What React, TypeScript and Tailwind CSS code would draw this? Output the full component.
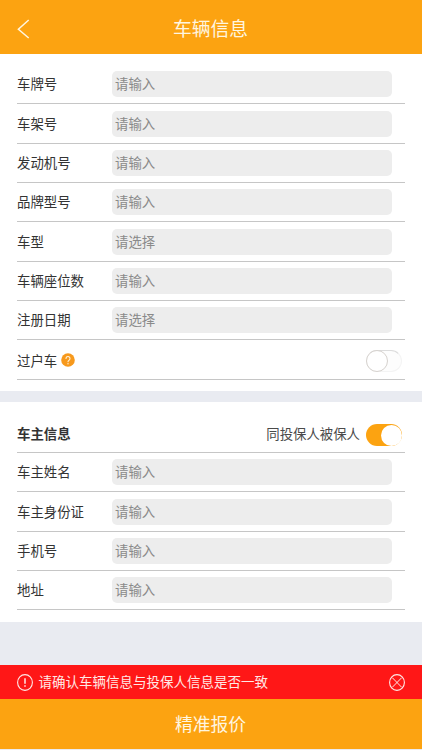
import { useState } from 'react'

interface Field {
  label: string
  placeholder: string
}

const vehicleFields: Field[] = [
  { label: '车牌号', placeholder: '请输入' },
  { label: '车架号', placeholder: '请输入' },
  { label: '发动机号', placeholder: '请输入' },
  { label: '品牌型号', placeholder: '请输入' },
  { label: '车型', placeholder: '请选择' },
  { label: '车辆座位数', placeholder: '请输入' },
  { label: '注册日期', placeholder: '请选择' },
]

const ownerFields: Field[] = [
  { label: '车主姓名', placeholder: '请输入' },
  { label: '车主身份证', placeholder: '请输入' },
  { label: '手机号', placeholder: '请输入' },
  { label: '地址', placeholder: '请输入' },
]

const FieldRow = ({ label, placeholder }: Field) => (
  <label className="flex h-[39.35px] items-center border-b border-[#c6c6c6]">
    <span className="w-[95px] shrink-0 pb-[2px]">{label}</span>
    <input
      placeholder={placeholder}
      className="h-[26px] w-[280px] rounded-[5px] bg-[#ededed] px-[3px] pb-[2px] outline-none placeholder:text-[#8a8a8a]"
    />
  </label>
)

const Toggle = ({ checked, onChange }: { checked: boolean; onChange: () => void }) => (
  <button
    role="switch"
    aria-checked={checked}
    onClick={onChange}
    className={`flex h-[22px] w-9 items-center rounded-full ${
      checked
        ? 'justify-end bg-[#fca311]'
        : 'justify-start border border-[#f4f4f4] border-t-[#dcdcdc] bg-[#fdfdfd]'
    }`}
  >
    <span
      className={`rounded-full bg-white ${
        checked ? 'mr-[0.5px] size-[21px]' : '-ml-px size-[22px] border border-[#d6d2ce]'
      }`}
    />
  </button>
)

export default function App() {
  const [transferred, setTransferred] = useState(false)
  const [sameAsInsured, setSameAsInsured] = useState(true)
  const [showAlert, setShowAlert] = useState(true)

  return (
    <div className="flex h-[750px] w-[422px] flex-col bg-[#e9ebf1] font-['Noto_Sans_CJK_SC',sans-serif] text-[13.4px] leading-5 text-[#333]">
      <header className="grid h-[54px] shrink-0 grid-cols-[1fr_auto_1fr] items-center bg-[#fca311] pl-[17px] pr-[18px] pt-1 text-[#fff6e0]">
        <button aria-label="返回">
          <svg width="13" height="20" viewBox="0 0 13 20" fill="none" stroke="currentColor" strokeWidth="1.5">
            <path d="M11.7 1 1.4 10.2 11.7 19" />
          </svg>
        </button>
        <h1 className="pb-[2px] text-[18.8px] leading-7">车辆信息</h1>
      </header>

      <section className="h-[337px] shrink-0 bg-white px-[17px] pt-[11px]">
        {vehicleFields.map((field) => (
          <FieldRow key={field.label} {...field} />
        ))}
        <div className="flex h-[39.35px] items-center border-b border-[#c6c6c6] pr-[3px]">
          <span>过户车</span>
          <svg className="ml-[3.5px]" width="14" height="14" viewBox="0 0 14 14" fill="none">
            <circle cx="7" cy="7" r="6.8" fill="#f7991c" />
            <path
              d="M5 5.5a2 2 0 1 1 3.2 1.6C7.4 7.7 7 8 7 8.8"
              stroke="#fff3dc"
              strokeWidth="1.1"
              strokeLinecap="round"
            />
            <circle cx="7" cy="10.7" r=".7" fill="#fff3dc" />
          </svg>
          <div className="ml-auto mt-[2px]">
            <Toggle checked={transferred} onChange={() => setTransferred(!transferred)} />
          </div>
        </div>
      </section>

      <section className="mt-[11px] h-[220px] shrink-0 bg-white px-[17px]">
        <div className="flex h-[51px] items-end justify-between border-b border-[#c6c6c6] pb-[5px] pr-[3px]">
          <h2 className="pb-[4px] font-bold">车主信息</h2>
          <div className="flex items-center">
            <span className="mr-[6px] pb-[4px] text-[#4a4a4a]">同投保人被保人</span>
            <Toggle checked={sameAsInsured} onChange={() => setSameAsInsured(!sameAsInsured)} />
          </div>
        </div>
        {ownerFields.map((field) => (
          <FieldRow key={field.label} {...field} />
        ))}
      </section>

      <footer className="mt-auto mb-px">
        {showAlert && (
          <div className="flex h-[34px] items-center bg-[#ff1717] px-[17px] text-[#ffe9e6]">
            <svg width="16" height="17" viewBox="0 0 16 17" fill="none" stroke="currentColor">
              <ellipse cx="8" cy="8.5" rx="7.4" ry="7.9" strokeWidth="1.1" />
              <path d="M8 4.2v5.6M8 11.3v1.5" strokeWidth="1.5" />
            </svg>
            <span className="ml-[5.5px] pb-[2px] text-[13.5px]">请确认车辆信息与投保人信息是否一致</span>
            <button className="ml-auto" aria-label="关闭" onClick={() => setShowAlert(false)}>
              <svg width="16" height="17" viewBox="0 0 16 17" fill="none" stroke="currentColor">
                <ellipse cx="8" cy="8.5" rx="7.4" ry="7.9" strokeWidth="1.1" />
                <path d="m3.2 3.6 9.6 9.8M12.8 3.6l-9.6 9.8" />
              </svg>
            </button>
          </div>
        )}
        <button className="block h-[50px] w-full bg-[#fca311] pr-px pb-[2px] text-[17.8px] text-[#fff6e0]">精准报价</button>
      </footer>
    </div>
  )
}
